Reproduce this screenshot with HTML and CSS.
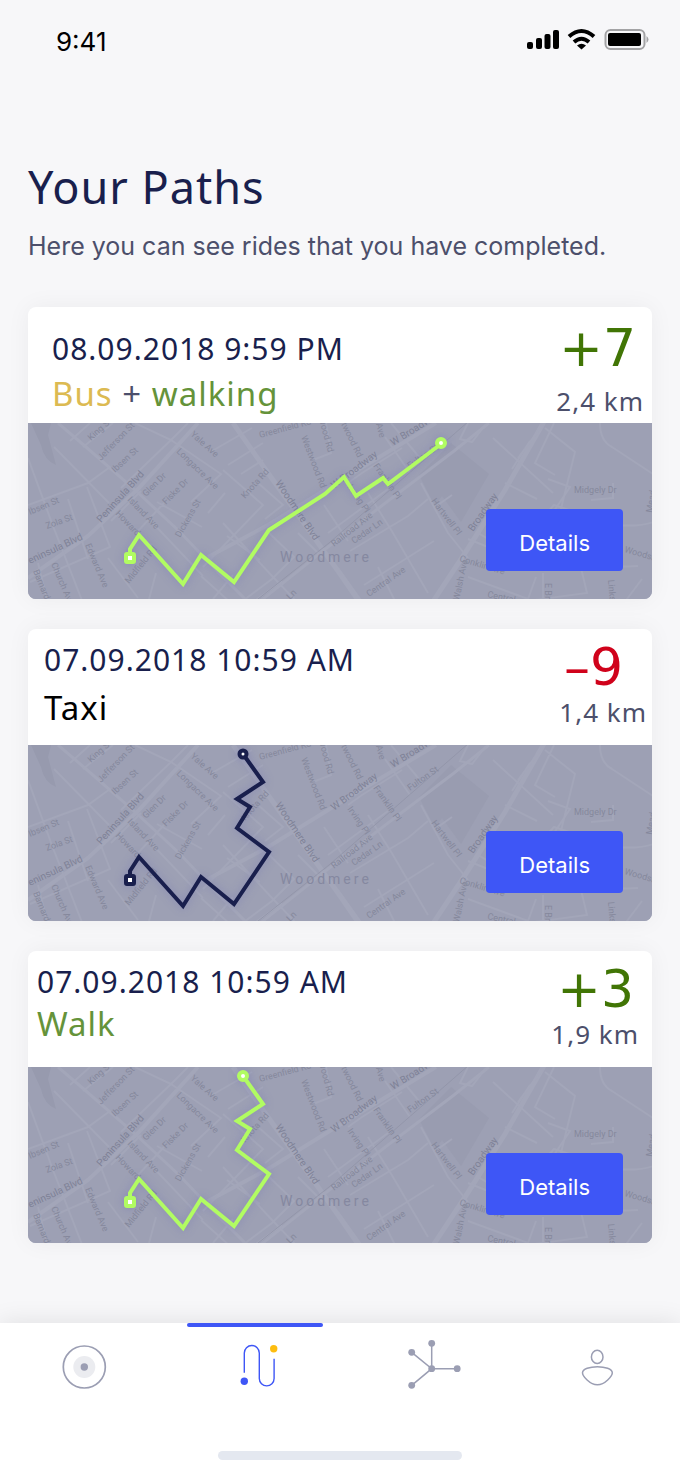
FILE: index.html
```html
<!DOCTYPE html>
<html lang="en">
  <head>
    <meta charset="UTF-8" />
    <meta name="viewport" content="width=device-width, initial-scale=1.0" />
    <title>Your Paths</title>
    <link rel="stylesheet" href="styles.css">
  </head>
  <body>
    <!-- shared map, used by every card -->
    <svg class="defs" width="0" height="0" aria-hidden="true">
      <defs>
        <symbol id="map" viewBox="0 0 624 176" preserveAspectRatio="xMidYMid slice">
          <rect width="624" height="176" fill="#9da0b4" />
          <path d="M3 0h20l-3 12 8 30q-12-5-15-20z" fill="#979aae" />
          <path d="M391 52l32-32 38 31-28 48-19-26-7 10z" fill="#999cb0" />
          <g class="roads">
            <path d="M30 0l28 24 48 42 45 42 40 42 30 30" stroke-width="3" />
            <path d="M0 155l60-42 50-47 60-66" stroke-width="4" />
            <path d="M205 0l35 50 70 98 22 32" stroke-width="5" />
            <path d="M180 134l60-32 78-48 90-54" stroke-width="4" />
            <path d="M404 180l35-53 38-60 40-70" stroke-width="5" />
            <path d="M230 180l70-56 60-46 66-50 35-28" stroke-width="3" />
            <path d="M0 82l60-22 22-16M0 35l25 68 30 77M26 24l55 56M40 76l20 60M59 64l23 60-80 35M55 24l30-24M42 18l20-18" />
            <path d="M107 0l36 17-50 48M143 17l50 34-30 28M160 0l-17 17M195 47l40 35-60 62M230 60l25 22-18 14M200 42l35-22M213 51l22-14M184 28l40-23" />
            <path d="M120 95l55 58M129 79l45 25M83 98l30-30M110 108l26-28M180 90l17-20M195 100l22 24 28 30 25 26M199 113l33 24M238 107l28 27-22 22-32 24M270 110l25 25M173 153l30 27" />
            <path d="M298 0l5 30-18 7M320 60l14-10 40-25M296 82l24 36M340 70l25 40 35 60M300 110l60-44M322 128l58-35 20-17M350 144l18 36M310 145l25 35M336 162l70-44M357 14l25 36M363 0l28 34M393 60l27 50 20 25M407 84l17-12" />
            <path d="M440 0l-8 16 12 3 14-18M465 15l60 55M490 35l27-36M517 5l30 24-18 73M502 18l-18 28M526 0l-19 40 20 12M477 60l32 16M520 56l22 8-16 24M510 100l16-18 24 8" />
            <path d="M572 0q0 18 12 24l50 33M585 60v15l-22 2M634 95q-20 12-60 5l-50-4M440 116l35 14M450 110q60 38 160 33M440 154l60 22M515 150v30M553 145l6 25-60 8M596 180l18-24M500 176l8-22" />
            <path d="M20 180l-10-40M80 135l30 40M128 150l-8 30M185 176l20-24M254 158l-30 22" />
          </g>
          <path d="M225 180l76-60 140-122" fill="none" stroke="#9396aa" stroke-width="1" />
          <g class="street">
            <text transform="translate(63 18) rotate(-42)">King St</text>
            <text transform="translate(73 38) rotate(-46)">Jefferson St</text>
            <text transform="translate(87 50) rotate(-43)">Ibsen St</text>
            <text transform="translate(118 74) rotate(-45)">Glen Dr</text>
            <text transform="translate(138 82) rotate(-45)">Fiske Dr</text>
            <text transform="translate(162 12) rotate(42)">Yale Ave</text>
            <text transform="translate(148 29) rotate(44)">Longacre Ave</text>
            <text transform="translate(99 77) rotate(46)">Island Ave</text>
            <text transform="translate(87 91) rotate(46)">Howard</text>
            <text transform="translate(2 92) rotate(-23)">Ibsen St</text>
            <text transform="translate(19 106) rotate(-20)">Zola St</text>
            <text transform="translate(57 122) rotate(67)">Edward Ave</text>
            <text transform="translate(23 141) rotate(67)">Church Ave</text>
            <text transform="translate(5 148) rotate(68)">Barnard</text>
            <text transform="translate(101 161) rotate(-51)">Midfield Rd</text>
            <text transform="translate(152 115) rotate(-60)">Dickens St</text>
            <text transform="translate(217 76) rotate(-48)">Knota Rd</text>
            <text transform="translate(232 15) rotate(-15)">Greenfield Rd</text>
            <text transform="translate(273 14) rotate(69)">Westwood Rd</text>
            <text transform="translate(291 -4) rotate(75)">wood Rd</text>
            <text transform="translate(313 1) rotate(64)">twood Rd</text>
            <text transform="translate(348 1) rotate(75)">Ave</text>
            <text transform="translate(306 124) rotate(-38)">Railroad Ave</text>
            <text transform="translate(326 121) rotate(-35)">Cedar Ln</text>
            <text transform="translate(382 46) rotate(-35)">Fulton St</text>
            <text transform="translate(345 43) rotate(55)">Franklin Pl</text>
            <text transform="translate(319 64) rotate(55)">Irving Pl</text>
            <text transform="translate(341 174) rotate(-35)">Central Ave</text>
            <text transform="translate(403 78) rotate(53)">Hartwell Pl</text>
            <text transform="translate(546 70)">Midgely Dr</text>
            <text transform="translate(431 138) rotate(17)">Conklin Ave</text>
            <text transform="translate(431 178) rotate(-78)">Walsh Ave</text>
            <text transform="translate(517 160) rotate(90)">E Broadway</text>
            <text transform="translate(580 157) rotate(85)">Links</text>
            <text transform="translate(596 129) rotate(16)">Woodside</text>
            <text transform="translate(624 90) rotate(-80)">Mead</text>
            <text transform="translate(459 174) rotate(12)">Central</text>
            <text transform="translate(262 177) rotate(-45)">Ln</text>
          </g>
          <g class="street blvd">
            <text transform="translate(73 100) rotate(-48)">Peninsula Blvd</text>
            <text transform="translate(2 141) rotate(-25)">eninsula Blvd</text>
            <text transform="translate(247 60) rotate(56)">Woodmere Blvd</text>
            <text transform="translate(306 66) rotate(-37)">W Broadway</text>
            <text transform="translate(365 23) rotate(-32)">W Broadway</text>
            <text transform="translate(445 109) rotate(-55)">Broadway</text>
          </g>
          <text class="town" x="252" y="139">Woodmere</text>
        </symbol>
      </defs>
    </svg>

    <header class="status-bar">
      <span class="time">9:41</span>
      <svg class="status-icons" width="122" height="24" viewBox="0 0 122 24" aria-hidden="true">
        <rect x="0" y="15" width="6" height="7" rx="2" />
        <rect x="9" y="11" width="6" height="11" rx="2" />
        <rect x="17.500" y="7" width="6" height="15" rx="2" />
        <rect x="26" y="3" width="6" height="19" rx="2" />
        <g fill="none" stroke="#000" stroke-width="4">
          <path d="M42 9.500Q54.500 -1.500 67 9.500" />
          <path d="M47 15Q54.500 8.500 62 15" />
        </g>
        <path d="M54.500 22.500L50 18.500Q54.500 15 59 18.500z" />
        <rect x="78.500" y="3" width="39" height="19" rx="5" fill="none" stroke="#a3a3a5" stroke-width="2" />
        <rect x="81" y="6" width="33" height="13" rx="2" />
        <path d="M119.500 9q4 3.500 0 7z" fill="#a3a3a5" />
      </svg>
    </header>

    <main class="paths">
      <h1>Your Paths</h1>
      <p class="intro">Here you can see rides that you have completed.</p>

      <article class="card card-bus">
        <div class="card-head">
          <div class="ride">
            <div class="date">08.09.2018 9:59 PM</div>
            <div class="type"><span class="bus">Bus</span> + <span class="walk">walking</span></div>
          </div>
          <div class="result">
            <div class="points plus">+7</div>
            <div class="distance">2,4 km</div>
          </div>
        </div>
        <div class="card-map">
          <svg class="map" viewBox="0 0 624 176" preserveAspectRatio="xMidYMid slice" aria-hidden="true">
            <use href="#map" width="624" height="176" />
            <g class="route green">
              <path d="M102 135v-9l9-14 44 49 18-29 33 27 35-52 56-36 19-17 12 19 27-18 5 6 53-40" />
              <rect x="98" y="131" width="8" height="8" rx="1" />
              <circle cx="413" cy="20" r="4" />
            </g>
          </svg>
          <button class="details" type="button">Details</button>
        </div>
      </article>

      <article class="card card-taxi">
        <div class="card-head">
          <div class="ride">
            <div class="date">07.09.2018 10:59 AM</div>
            <div class="type">Taxi</div>
          </div>
          <div class="result">
            <div class="points minus">–9</div>
            <div class="distance">1,4 km</div>
          </div>
        </div>
        <div class="card-map">
          <svg class="map" viewBox="0 0 624 176" preserveAspectRatio="xMidYMid slice" aria-hidden="true">
            <use href="#map" width="624" height="176" />
            <g class="route navy">
              <path d="M102 135v-9l9-14 44 49 18-29 33 27 35-52-32-24 13-21-13-8 26-17-20-28" />
              <rect x="98" y="131" width="8" height="8" rx="1" />
              <circle cx="215" cy="9" r="3.500" />
            </g>
          </svg>
          <button class="details" type="button">Details</button>
        </div>
      </article>

      <article class="card card-walk">
        <div class="card-head">
          <div class="ride">
            <div class="date">07.09.2018 10:59 AM</div>
            <div class="type"><span class="walk">Walk</span></div>
          </div>
          <div class="result">
            <div class="points plus">+3</div>
            <div class="distance">1,9 km</div>
          </div>
        </div>
        <div class="card-map">
          <svg class="map" viewBox="0 0 624 176" preserveAspectRatio="xMidYMid slice" aria-hidden="true">
            <use href="#map" width="624" height="176" />
            <g class="route green">
              <path d="M102 135v-9l9-14 44 49 18-29 33 27 35-52-32-24 13-21-13-8 26-17-20-28" />
              <rect x="98" y="131" width="8" height="8" rx="1" />
              <circle cx="215" cy="9" r="4" />
            </g>
          </svg>
          <button class="details" type="button">Details</button>
        </div>
      </article>
    </main>

    <footer class="tab-bar">
      <nav class="tabs">
        <a href="#home" aria-label="Home">
          <svg width="80" height="60" viewBox="0 0 80 60">
            <circle cx="39.300" cy="34" r="21" fill="none" stroke="#9b9eb3" stroke-width="1.700" />
            <circle cx="39.300" cy="34" r="11" fill="#ebecf0" />
            <circle cx="39.300" cy="34" r="3.700" fill="#9b9eb3" />
          </svg>
        </a>
        <a href="#paths" class="active" aria-label="Paths" aria-current="page">
          <svg width="80" height="60" viewBox="0 0 80 60">
            <path d="M29.300 39.700V20a7.500 7.500 0 0 1 15 0V45.500a7.400 7.400 0 0 0 14.800 0V25.700" fill="none" stroke="#3e56f6" stroke-width="1.400" />
            <circle cx="29.300" cy="48.200" r="3.700" fill="#3e56f6" />
            <circle cx="58.700" cy="15.700" r="3.700" fill="#fdbd10" />
          </svg>
        </a>
        <a href="#network" aria-label="Network">
          <svg width="80" height="60" viewBox="0 0 80 60">
            <path d="M46.700 10v25.700H72M26.700 19.300l20 16.400-20 16.600" fill="none" stroke="#9b9eb3" stroke-width="1.500" />
            <g fill="#9b9eb3">
              <circle cx="46.700" cy="10.300" r="3.400" />
              <circle cx="26.700" cy="19.300" r="3.400" />
              <circle cx="46.700" cy="35.700" r="3.400" />
              <circle cx="72.200" cy="35.700" r="3.400" />
              <circle cx="26.700" cy="52.300" r="3.400" />
            </g>
          </svg>
        </a>
        <a href="#profile" aria-label="Profile">
          <svg width="80" height="60" viewBox="0 0 80 60" fill="none" stroke="#9b9eb3" stroke-width="1.500">
            <ellipse cx="42.200" cy="23.900" rx="5.800" ry="6.600" />
            <path d="M27.500 39.800C27.500 36 35 33.700 42.400 33.700S57.300 36 57.300 39.800C57.300 43 50 51.800 42.400 51.800S27.500 43 27.500 39.800z" />
          </svg>
        </a>
      </nav>
      <div class="home-bar"></div>
    </footer>
  </body>
</html>
```
FILE: styles.css
```css
* {
  box-sizing: border-box;
}

body {
  display: flex;
  flex-direction: column;
  min-height: 100vh;
  margin: 0;
  background-color: #f7f7f9;
  color: #4c4f6b;
  font-family: "Noto Sans", sans-serif;
  letter-spacing: 1px;
}

.defs {
  position: absolute;
}

.status-bar {
  display: flex;
  justify-content: space-between;
  align-items: flex-start;
  padding: 27px 31px 0 56px;
}

.time {
  font-family: Inter, sans-serif;
  font-size: 26px;
  line-height: 30px;
  letter-spacing: normal;
  color: #000;
}

.paths {
  padding: 102px 28px 80px;
}

h1 {
  margin: 0;
  font-size: 45px;
  line-height: 56px;
  font-weight: normal;
  color: #191f4d;
}

.intro {
  margin: 15px 0 45px;
  font-family: Inter, sans-serif;
  font-size: 25px;
  line-height: 32px;
  letter-spacing: normal;
}

/* cards */
.card {
  overflow: hidden;
  border-radius: 8px;
  background-color: #fff;
  box-shadow: 0 0 24px rgba(0, 0, 0, 0.05);
}

.card + .card {
  margin-top: 30px;
}

.card-head {
  display: flex;
  justify-content: space-between;
  height: 116px;
}

.date {
  font-size: 30px;
  line-height: 36px;
  color: #191f4d;
}

.type {
  font-size: 33px;
  line-height: 40px;
}

.result {
  text-align: right;
}

.points {
  font-family: "DejaVu Sans", sans-serif;
  font-size: 52px;
  line-height: 56px;
  letter-spacing: normal;
}

.distance {
  font-size: 26px;
  line-height: 32px;
}

.bus {
  color: #dcba52;
}

.walk {
  color: #65933a;
}

.plus {
  color: #417505;
}

.minus {
  color: #d0021b;
}

.card-bus .ride {
  padding: 24px 0 0 24px;
}
.card-bus .type {
  margin-top: 7px;
}
.card-bus .result {
  padding: 13px 8px 0 0;
}
.card-bus .points {
  padding-right: 8px;
}
.card-bus .distance {
  margin-top: 9px;
}

.card-taxi .ride {
  padding: 13px 0 0 16px;
}
.card-taxi .type {
  margin-top: 10px;
  color: #000;
}
.card-taxi .result {
  padding: 10px 5px 0 0;
}
.card-taxi .points {
  padding-right: 24px;
}
.card-taxi .distance {
  margin-top: 1px;
}

.card-walk .ride {
  padding: 13px 0 0 9px;
}
.card-walk .type {
  margin-top: 4px;
}
.card-walk .result {
  padding: 10px 13px 0 0;
}
.card-walk .points {
  padding-right: 5px;
}
.card-walk .distance {
  margin-top: 1px;
}

/* map and button share one cell */
.card-map {
  display: grid;
  background-color: #9da0b4;
}

.map,
.details {
  grid-area: 1 / 1;
}

.map {
  display: block;
  width: 100%;
  height: 176px;
}

.roads {
  fill: none;
  stroke: #a3a6b9;
  stroke-width: 2px;
}

.street {
  fill: #85889c;
  font-family: Roboto, sans-serif;
  font-size: 9px;
  letter-spacing: normal;
}

.blvd {
  fill: #7f8297;
  font-size: 10px;
}

.town {
  fill: #8588a0;
  font-family: Roboto, sans-serif;
  font-size: 14px;
  letter-spacing: 3px;
}

.route path {
  fill: none;
}

.route {
  fill: #fff;
  stroke-width: 4px;
  filter: drop-shadow(0 0 5px rgba(100, 100, 180, 0.4));
}

.green {
  stroke: #b1fc62;
}

.navy {
  stroke: #191f4d;
}

.details {
  justify-self: end;
  align-self: end;
  margin: 0 29px 28px 0;
  padding: 18px 33px 12px;
  border: 0;
  border-radius: 4px;
  background-color: #3e56f6;
  color: #fff;
  font-family: Inter, sans-serif;
  font-size: 22px;
  line-height: 32px;
  cursor: pointer;
}

/* bottom bar */
.tab-bar {
  margin-top: auto;
  padding-bottom: 12px;
  background-color: #fff;
  box-shadow: 0 0 24px rgba(0, 0, 0, 0.1);
}

.tabs {
  display: grid;
  grid-template-columns: repeat(4, 1fr);
}

.tabs a {
  display: flex;
  flex-direction: column;
  align-items: center;
  padding-bottom: 58px;
}

.tabs a::before {
  content: "";
  width: 80%;
  height: 4px;
  margin-bottom: 6px;
  border-radius: 2px;
}

.tabs .active::before {
  background-color: #3e56f6;
}

.home-bar {
  width: 36%;
  height: 9px;
  margin: 0 auto;
  border-radius: 5px;
  background-color: #e4e8f0;
}
```
